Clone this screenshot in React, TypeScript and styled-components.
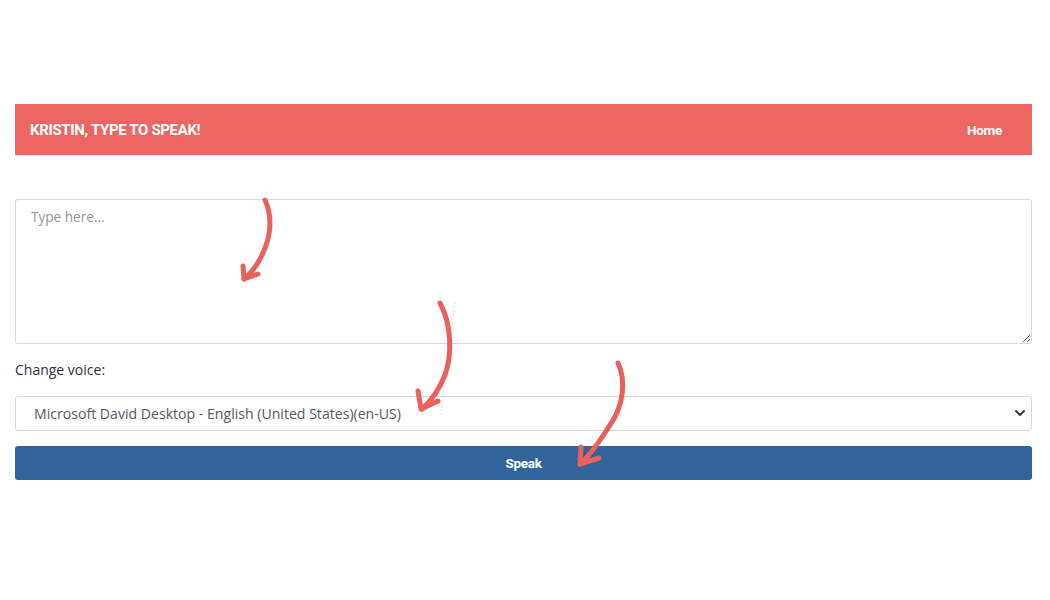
import React from "react";
import styled, { createGlobalStyle } from "styled-components";

const Global = createGlobalStyle`
  html, body { margin: 0; padding: 0; background: #ffffff; }
  body { font-family: "Open Sans", "Liberation Sans", sans-serif; }
  * { box-sizing: border-box; }
`;

const Page = styled.div`
  position: relative;
  width: 1050px;
  height: 600px;
  padding: 104px 18px 0 15px;
`;

const NavBar = styled.nav`
  height: 51px;
  background: #ec6762;
  display: flex;
  align-items: center;
  justify-content: space-between;
  padding: 1px 30px 0 15px;
  font-family: Roboto, "Liberation Sans", sans-serif;
  font-weight: 700;
  color: #ffffff;
`;

const Brand = styled.span`
  font-size: 15px;
  letter-spacing: -0.35px;
  text-transform: uppercase;
`;

const NavLink = styled.span`
  font-size: 13.5px;
  letter-spacing: -0.3px;
`;

const Form = styled.div`
  display: flex;
  flex-direction: column;
  margin-top: 44px;
`;

const TextArea = styled.textarea`
  height: 145px;
  width: 100%;
  border: 1px solid #d6d9dd;
  border-radius: 3px;
  padding: 7px 15px;
  font-family: "Open Sans", "Liberation Sans", sans-serif;
  font-size: 13.6px;
  color: #495057;
  resize: vertical;
  outline: none;
  &::placeholder { color: #8f969c; }
`;

const Label = styled.label`
  margin-top: 17px;
  font-size: 14px;
  color: #2b3040;
  line-height: 18px;
`;

const SelectWrap = styled.div`
  position: relative;
  margin-top: 17px;
`;

const Select = styled.select`
  appearance: none;
  width: 100%;
  height: 35px;
  border: 1px solid #d6d9dd;
  border-radius: 3px;
  padding: 0 18px;
  font-family: "Open Sans", "Liberation Sans", sans-serif;
  font-size: 14.1px;
  color: #555a66;
  background: #ffffff;
  outline: none;
`;

const Chevron = styled.svg`
  position: absolute;
  right: 6px;
  top: 13px;
  pointer-events: none;
`;

const SpeakButton = styled.button`
  margin-top: 15px;
  height: 34px;
  width: 100%;
  border: none;
  border-radius: 3px;
  background: #31649a;
  color: #ffffff;
  font-family: Roboto, "Liberation Sans", sans-serif;
  font-weight: 700;
  font-size: 13.5px;
  letter-spacing: -0.3px;
`;

const Overlay = styled.svg`
  position: absolute;
  left: 0;
  top: 0;
  pointer-events: none;
`;

const arrows = [
  {
    body: "M265 200 C272 215 272 235 262 255 C257 266 250 274 244 279",
    head: "M243 266 L244 279 L258 274",
  },
  {
    body: "M440 303 C452 325 452 355 445 375 C438 392 430 402 422 409",
    head: "M418 391 L421 409 L438 401",
  },
  {
    body: "M618 363 C626 380 624 405 610 425 C600 441 590 455 580 464",
    head: "M581 447 L580 464 L599 458",
  },
];

export default function App() {
  return (
    <>
      <Global />
      <Page>
        <NavBar>
          <Brand>Kristin, type to speak!</Brand>
          <NavLink>Home</NavLink>
        </NavBar>
        <Form>
          <TextArea placeholder="Type here..." />
          <Label>Change voice:</Label>
          <SelectWrap>
            <Select defaultValue="david">
              <option value="david">Microsoft David Desktop - English (United States)(en-US)</option>
            </Select>
            <Chevron width="12" height="9" viewBox="0 0 12 9">
              <path d="M2 2 L6 6 L10 2" fill="none" stroke="#343a40" strokeWidth="2" strokeLinecap="round" strokeLinejoin="round" />
            </Chevron>
          </SelectWrap>
          <SpeakButton>Speak</SpeakButton>
        </Form>
        <Overlay width="1050" height="600" viewBox="0 0 1050 600">
          <line x1="455" y1="302" x2="441" y2="414" stroke="#d8d8d8" strokeWidth="0.8" strokeDasharray="2 2" />
          {arrows.map((a, i) => (
            <g key={i} fill="none" stroke="#e9615d" strokeWidth="5" strokeLinecap="round" strokeLinejoin="round">
              <path d={a.body} />
              <path d={a.head} />
            </g>
          ))}
        </Overlay>
      </Page>
    </>
  );
}
